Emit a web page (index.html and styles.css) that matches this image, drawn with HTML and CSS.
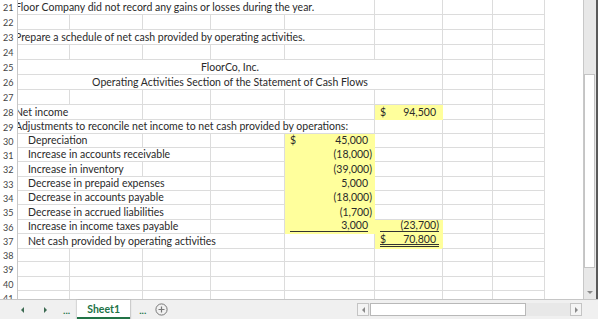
FILE: index.html
```html
<!DOCTYPE html>
<html>
<head>
<meta charset="utf-8">
<link rel="stylesheet" href="styles.css">
</head>
<body>
<div class="app">
  <div class="top">
    <div class="grid">
      <div class="row r15"><div class="rh">21</div><div class="c s5 t0">Floor Company did not record any gains or losses during the year.</div><div class="c"></div><div class="c"></div><div class="c"></div></div>
      <div class="row r15"><div class="rh">22</div><div class="c"></div><div class="c"></div><div class="c"></div><div class="c"></div><div class="c"></div><div class="c"></div><div class="c"></div><div class="c"></div></div>
      <div class="row r15"><div class="rh">23</div><div class="c s5 t0">Prepare a schedule of net cash provided by operating activities.</div><div class="c"></div><div class="c"></div><div class="c"></div></div>
      <div class="row r15"><div class="rh">24</div><div class="c"></div><div class="c"></div><div class="c"></div><div class="c"></div><div class="c"></div><div class="c"></div><div class="c"></div><div class="c"></div></div>
      <div class="row r15"><div class="rh">25</div><div class="c s6 ctr">FloorCo, Inc.</div><div class="c"></div><div class="c"></div></div>
      <div class="row r15"><div class="rh">26</div><div class="c s6 ctr">Operating Activities Section of the Statement of Cash Flows</div><div class="c"></div><div class="c"></div></div>
      <div class="row r15"><div class="rh">27</div><div class="c"></div><div class="c"></div><div class="c"></div><div class="c"></div><div class="c"></div><div class="c"></div><div class="c"></div><div class="c"></div></div>
      <div class="row r15"><div class="rh">28</div><div class="c s2 t0">Net income</div><div class="c"></div><div class="c"></div><div class="c"></div><div class="c y num"><span>$</span><span class="pos">94,500</span></div><div class="c"></div><div class="c"></div></div>
      <div class="row r14"><div class="rh">29</div><div class="c s5 t0">Adjustments to reconcile net income to net cash provided by operations:</div><div class="c"></div><div class="c"></div><div class="c"></div></div>
      <div class="row r14"><div class="rh">30</div><div class="c s2 t1">Depreciation</div><div class="c"></div><div class="c"></div><div class="c y num"><span>$</span><span class="pos">45,000</span></div><div class="c"></div><div class="c"></div><div class="c"></div></div>
      <div class="row r14"><div class="rh">31</div><div class="c s3 t1">Increase in accounts receivable</div><div class="c"></div><div class="c y num"><span></span><span>(18,000)</span></div><div class="c"></div><div class="c"></div><div class="c"></div></div>
      <div class="row r15"><div class="rh">32</div><div class="c s2 t1">Increase in inventory</div><div class="c"></div><div class="c"></div><div class="c y num"><span></span><span>(39,000)</span></div><div class="c"></div><div class="c"></div><div class="c"></div></div>
      <div class="row r14"><div class="rh">33</div><div class="c s3 t1">Decrease in prepaid expenses</div><div class="c"></div><div class="c y num"><span></span><span class="pos">5,000</span></div><div class="c"></div><div class="c"></div><div class="c"></div></div>
      <div class="row r14"><div class="rh">34</div><div class="c s3 t1">Decrease in accounts payable</div><div class="c"></div><div class="c y num"><span></span><span>(18,000)</span></div><div class="c"></div><div class="c"></div><div class="c"></div></div>
      <div class="row r15"><div class="rh">35</div><div class="c s3 t1">Decrease in accrued liabilities</div><div class="c"></div><div class="c y num"><span></span><span>(1,700)</span></div><div class="c"></div><div class="c"></div><div class="c"></div></div>
      <div class="row r14"><div class="rh">36</div><div class="c s3 t1">Increase in income taxes payable</div><div class="c"></div><div class="c y num"><div class="box ul1 be"><span></span><span>3,000</span></div></div><div class="c y num"><div class="box ul1 bf"><span></span><span>(23,700)</span></div></div><div class="c"></div><div class="c"></div></div>
      <div class="row r14"><div class="rh">37</div><div class="c s4 t1">Net cash provided by operating activities</div><div class="c"></div><div class="c y num"><div class="box ul2 bf"><span>$</span><span class="pos2">70,800</span></div></div><div class="c"></div><div class="c"></div></div>
      <div class="row r14"><div class="rh">38</div><div class="c"></div><div class="c"></div><div class="c"></div><div class="c"></div><div class="c"></div><div class="c"></div><div class="c"></div><div class="c"></div></div>
      <div class="row r15"><div class="rh">39</div><div class="c"></div><div class="c"></div><div class="c"></div><div class="c"></div><div class="c"></div><div class="c"></div><div class="c"></div><div class="c"></div></div>
      <div class="row r14"><div class="rh">40</div><div class="c"></div><div class="c"></div><div class="c"></div><div class="c"></div><div class="c"></div><div class="c"></div><div class="c"></div><div class="c"></div></div>
      <div class="row r15"><div class="rh">41</div><div class="c"></div><div class="c"></div><div class="c"></div><div class="c"></div><div class="c"></div><div class="c"></div><div class="c"></div><div class="c"></div></div>
    </div>
    <div class="vscroll">
      <div class="vtrack"><div class="vthumb"></div></div>
      <div class="vdown"></div>
    </div>
  </div>
  <div class="tabbar">
    <span class="tri-l"></span>
    <span class="tri-r"></span>
    <span class="dots d1">...</span>
    <div class="tab">Sheet1</div>
    <span class="dots d2">...</span>
    <span class="plus">
      <svg width="13" height="13" viewBox="0 0 13 13"><circle cx="6.5" cy="6.5" r="5.6" fill="none" stroke="#777" stroke-width="1"/><path d="M6.5 3.5v6M3.5 6.5h6" stroke="#777" stroke-width="1.2"/></svg>
    </span>
    <div class="hscroll">
      <div class="hbtn"><span class="htri-l"></span></div>
      <div class="hthumb"></div>
      <div class="htrack"></div>
      <div class="hbtn"><span class="htri-r"></span></div>
    </div>
  </div>
</div>
</body>
</html>
```

FILE: styles.css
```css
* { box-sizing: border-box; }
html, body { margin: 0; padding: 0; background: #fff; }
body { width: 598px; height: 319px; overflow: hidden; font-family: Lato, "Open Sans", sans-serif; }

.app { display: flex; flex-direction: column; width: 598px; height: 319px; }
.top { display: flex; height: 299px; overflow: hidden; }
.grid { flex: 1; overflow: hidden; }

.row {
  display: grid;
  grid-template-columns: 18px 52px 73px 68px 74px 90px 68px 50px 52px;
}
.r15 { height: 15px; }
.r14 { height: 14px; }

.rh {
  font-size: 9px;
  color: #444;
  padding-left: 3px;
  display: flex;
  align-items: center;
  border-right: 1px solid #c8c8c8;
  background: #fff;
  position: relative;
  z-index: 2;
}

.c {
  border-right: 1px solid #dcdcdc;
  border-bottom: 1px solid #dcdcdc;
  font-size: 10.5px;
  color: #2a2a2a;
  white-space: nowrap;
  display: flex;
  align-items: flex-end;
  line-height: 12px;
  padding-bottom: 1px;
  min-width: 0;
}
.s2 { grid-column: span 2; }
.s3 { grid-column: span 3; }
.s4 { grid-column: span 4; }
.s5 { grid-column: span 5; }
.s6 { grid-column: span 6; }
.t0 { padding-left: 0; margin-left: -3px; }
.t1 { padding-left: 10px; }
.ctr { justify-content: center; }

.y { background: #ffff9c; border-color: #ffff9c; }
.num { justify-content: space-between; padding-left: 5px; padding-right: 2px; }
.pos { padding-right: 4px; }
.box { flex: 1; display: flex; justify-content: space-between; line-height: 11px; }
.ul1 { border-bottom: 1px solid #333; }
.ul2 { border-bottom: 3px double #333; line-height: 10px; }
.be { margin-right: 4px; }
.bf { margin-left: 0; margin-right: 1px; }
.pos2 { padding-right: 3px; }

.vscroll {
  width: 15px;
  display: flex;
  flex-direction: column;
  background: #e8e8e8;
  border-left: 1px solid #c8c8c8;
  border-right: 2px solid #5a5a5a;
}
.vtrack { flex: 1; padding-top: 74px; padding-bottom: 12px; }
.vthumb { height: 194px; background: #fff; border: 1px solid #c4c4c4; margin: 0 1px 0 0; }
.vdown {
  height: 14px;
  display: flex;
  justify-content: center;
  align-items: center;
}
.vdown::before {
  content: "";
  border-left: 3px solid transparent;
  border-right: 3px solid transparent;
  border-top: 3px solid #8a8a8a;
}

.tabbar {
  height: 20px;
  background: #f0f0f0;
  border-top: 1px solid #c6c6c6;
  display: flex;
  align-items: center;
}
.tri-l {
  margin-left: 21px;
  border-top: 3px solid transparent;
  border-bottom: 3px solid transparent;
  border-right: 3px solid #3d6b52;
}
.tri-r {
  margin-left: 20px;
  border-top: 3px solid transparent;
  border-bottom: 3px solid transparent;
  border-left: 3px solid #3d6b52;
}
.dots {
  color: #217346;
  font-size: 10px;
  font-weight: bold;
  letter-spacing: 0;
  align-self: flex-end;
  padding-bottom: 3px;
}
.d1 { margin-left: 16px; }
.tab {
  margin-left: 7px;
  width: 53px;
  height: 19px;
  background: #fff;
  color: #217346;
  font-weight: bold;
  font-size: 10.5px;
  display: flex;
  align-items: center;
  justify-content: center;
  border-bottom: 2px solid #217346;
  box-shadow: 1px 0 1px rgba(0,0,0,0.15), -1px 0 1px rgba(0,0,0,0.1);
}
.d2 { margin-left: 9px; }
.plus { margin-left: 9px; display: flex; align-items: center; }

.hscroll {
  margin-left: auto;
  margin-right: 16px;
  width: 225px;
  height: 13px;
  display: flex;
  background: #e8e8e8;
}
.hbtn {
  width: 12px;
  border: 1px solid #c4c4c4;
  background: #f4f4f4;
  display: flex;
  align-items: center;
  justify-content: center;
}
.htri-l {
  border-top: 3px solid transparent;
  border-bottom: 3px solid transparent;
  border-right: 3px solid #8a8a8a;
}
.htri-r {
  border-top: 3px solid transparent;
  border-bottom: 3px solid transparent;
  border-left: 3px solid #8a8a8a;
}
.hthumb {
  margin-left: 1px;
  width: 156px;
  background: #fff;
  border: 1px solid #b8b8b8;
}
.htrack { flex: 1; }
```
